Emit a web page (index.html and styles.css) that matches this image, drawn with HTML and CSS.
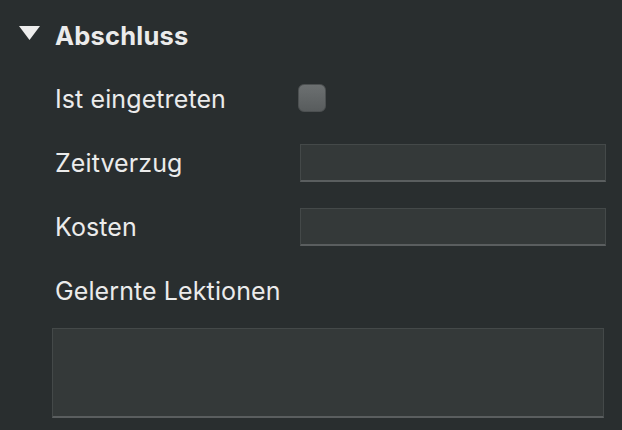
FILE: index.html
```html
<!DOCTYPE html>
<html lang="de">
<head>
<meta charset="utf-8">
<title>Abschluss</title>
<link rel="stylesheet" href="styles.css">
</head>
<body>
<div class="panel">
  <div class="header">
    <svg class="disclosure" width="21" height="14" viewBox="0 0 21 14"><polygon points="0,0 21,0 10.5,14" fill="#ededed"/></svg>
    <span class="title">Abschluss</span>
  </div>
  <div class="row">
    <span class="label">Ist eingetreten</span>
    <span class="checkbox"></span>
  </div>
  <div class="row">
    <span class="label">Zeitverzug</span>
    <span class="field"></span>
  </div>
  <div class="row">
    <span class="label">Kosten</span>
    <span class="field"></span>
  </div>
  <div class="row">
    <span class="label">Gelernte Lektionen</span>
  </div>
  <div class="textarea"></div>
</div>
</body>
</html>
```

FILE: styles.css
```css
html, body {
  margin: 0;
  padding: 0;
  background: #292e2f;
  height: 100%;
  overflow: hidden;
}
.panel {
  padding-top: 3px;
  font-family: "Inter", "Liberation Sans", sans-serif;
  color: #ebebeb;
}
.header {
  height: 64px;
  display: flex;
  align-items: center;
  padding-left: 19px;
}
.disclosure {
  display: block;
  margin-right: 15px;
  margin-top: -4px;
}
.title {
  font-size: 25.5px;
  font-weight: 700;
  letter-spacing: 0.2px;
}
.row {
  height: 64px;
  display: grid;
  grid-template-columns: 245px 1fr;
  align-items: center;
  padding-left: 55px;
  padding-right: 16px;
}
.label {
  font-size: 25px;
  font-weight: 400;
  letter-spacing: 0.1px;
}
.checkbox {
  width: 28px;
  height: 28px;
  margin-left: -2px;
  margin-top: -2px;
  box-sizing: border-box;
  border-radius: 6px;
  background: linear-gradient(#6c7071, #585c5d);
  border: 1px solid #4c5051;
}
.field {
  height: 38px;
  box-sizing: border-box;
  background: #343939;
  border: 1px solid #444949;
  border-bottom: 2px solid #5a5e5f;
}
.textarea {
  margin: 5px 18px 0 52px;
  height: 90px;
  box-sizing: border-box;
  background: #343939;
  border: 1px solid #444949;
  border-bottom: 2px solid #5a5e5f;
}
```
